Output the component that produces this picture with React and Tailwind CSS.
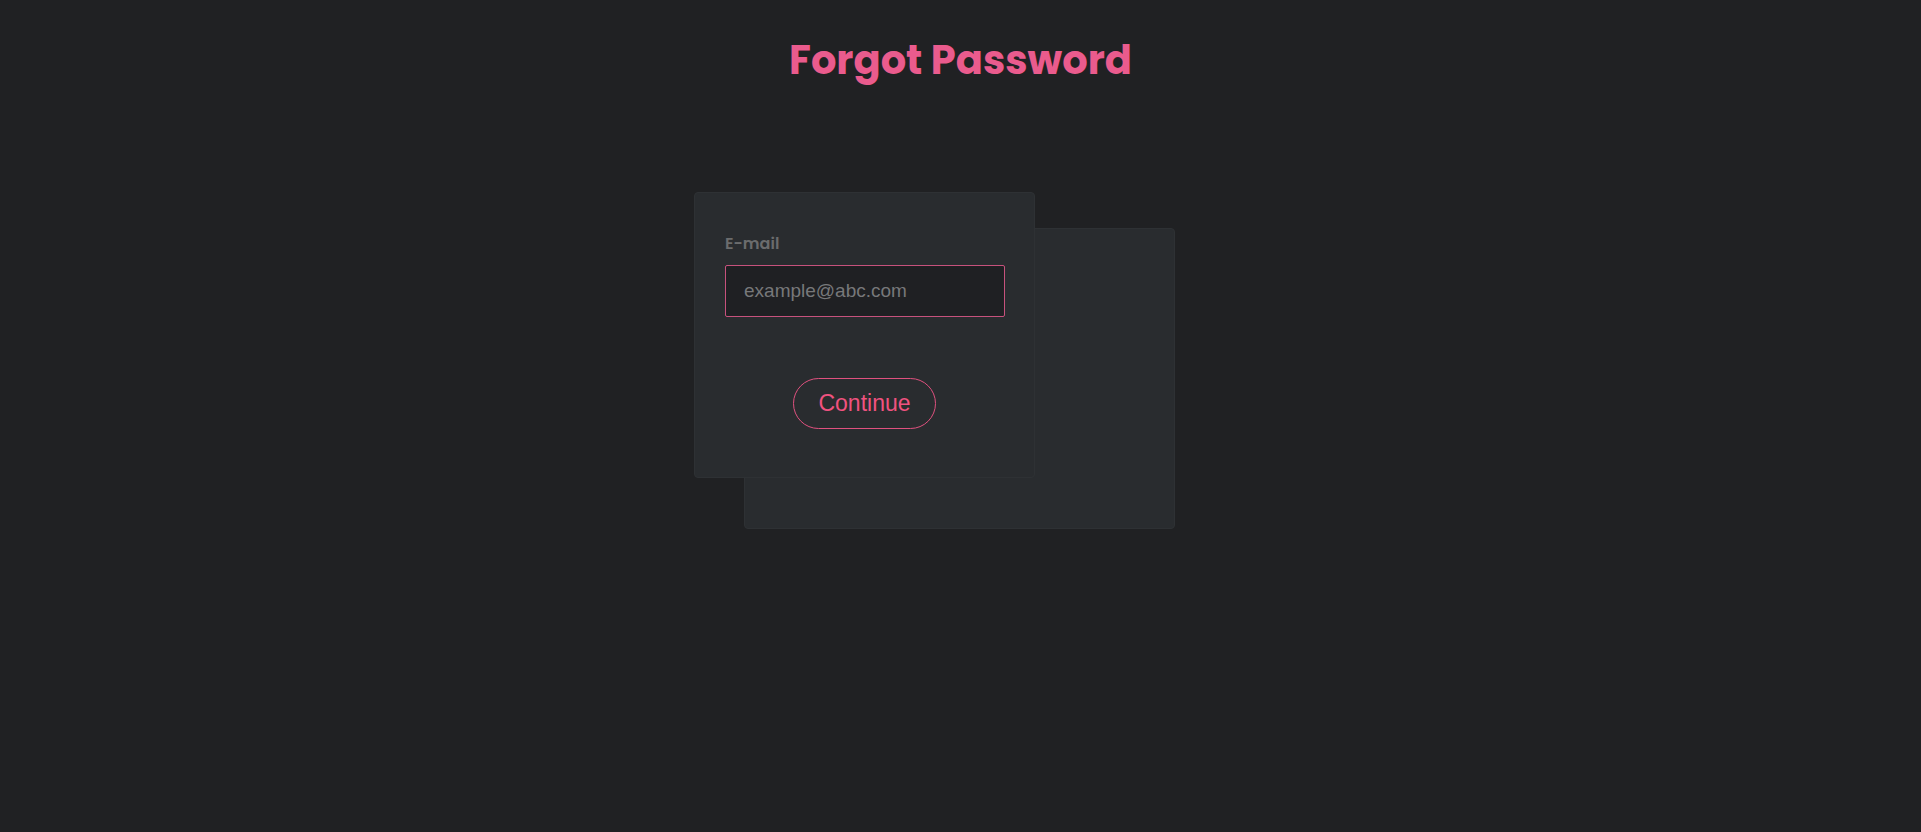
import React from "react";

export default function App() {
  return (
    <div className="min-h-screen w-full bg-[#202123] flex flex-col items-center">
      <h1 className="mt-[30px] h-[60px] leading-[60px] text-[40px] font-bold text-[#ea5b8d] font-['Poppins','Open_Sans',sans-serif]">
        Forgot Password
      </h1>
      <div className="relative mt-[102px] w-[533px] h-[337px]">
        <div className="absolute left-[50px] top-[36px] w-[431px] h-[301px] bg-[#292c2f] rounded-[4px] border border-[#2e3134]" />
        <div className="relative w-[341px] h-[286px] bg-[#292c2f] rounded-[4px] border border-[#2e3134] px-[30px] pt-[39px] flex flex-col">
          <label className="block h-[24px] leading-[24px] text-[16px] font-semibold text-[#6b6c6d] font-['Poppins','Open_Sans',sans-serif]">
            E-mail
          </label>
          <input
            type="text"
            placeholder="example@abc.com"
            className="mt-[9px] w-[280px] h-[52px] bg-[#1f2023] border border-[#c7527d] rounded-[2px] px-[18px] text-[19px] text-[#cccccc] placeholder:text-[#77787a] outline-none font-['Liberation_Sans',Arial,sans-serif]"
          />
          <div className="mt-[61px] flex justify-center">
            <button className="w-[143px] h-[51px] rounded-full border border-[#e0517f] text-[#f0527f] text-[23px] bg-transparent font-['Liberation_Sans',Arial,sans-serif]">
              Continue
            </button>
          </div>
        </div>
      </div>
    </div>
  );
}
